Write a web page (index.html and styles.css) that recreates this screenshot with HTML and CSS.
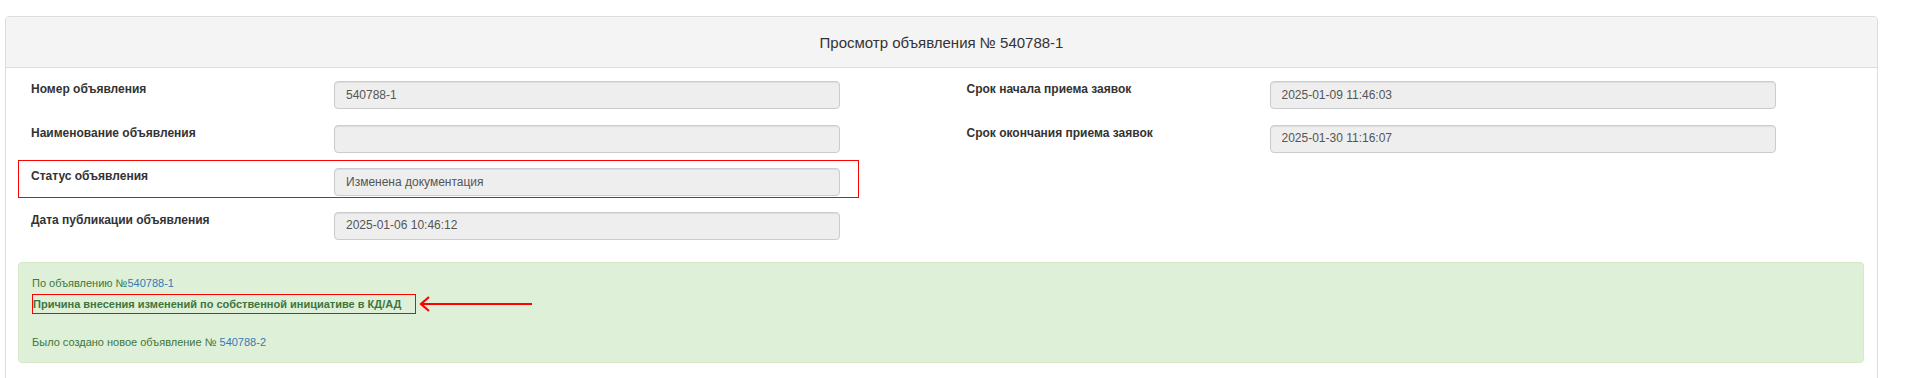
FILE: index.html
```html
<!DOCTYPE html>
<html lang="ru">
  <head>
    <meta charset="UTF-8" />
    <meta name="viewport" content="width=device-width,initial-scale=1.0" />
    <title>Просмотр объявления</title>
    <link rel="stylesheet" href="styles.css">
  </head>
  <body>
    <div class="panel">
      <div class="panel-heading">Просмотр объявления № 540788-1</div>
      <div class="panel-body">
        <div class="columns">
          <div class="col">
            <div class="field">
              <label>Номер объявления</label>
              <div class="input">540788-1</div>
            </div>
            <div class="field">
              <label>Наименование объявления</label>
              <div class="input"></div>
            </div>
            <div class="field marked">
              <label>Статус объявления</label>
              <div class="input">Изменена документация</div>
            </div>
            <div class="field">
              <label>Дата публикации объявления</label>
              <div class="input">2025-01-06 10:46:12</div>
            </div>
          </div>
          <div class="col">
            <div class="field">
              <label>Срок начала приема заявок</label>
              <div class="input">2025-01-09 11:46:03</div>
            </div>
            <div class="field">
              <label>Срок окончания приема заявок</label>
              <div class="input">2025-01-30 11:16:07</div>
            </div>
          </div>
        </div>

        <div class="alert">
          <div class="line">По объявлению №<a href="#">540788-1</a></div>
          <div class="reason-row">
            <span class="reason">Причина внесения изменений по собственной инициативе в КД/АД</span>
            <svg class="arrow" width="114" height="16" viewBox="0 0 114 16">
              <path d="M3 8 H113" stroke="#f00" stroke-width="2" fill="none"/>
              <path d="M10 1 L2 8 L10 15" stroke="#f00" stroke-width="2.2" fill="none"/>
            </svg>
          </div>
          <div class="line last">Было создано новое объявление № <a href="#">540788-2</a></div>
        </div>
      </div>
    </div>
  </body>
</html>
```

FILE: styles.css
```css
body {
  margin: 0;
  padding: 16px 27px 0 5px;
  font-family: "Liberation Sans", Arial, sans-serif;
  font-size: 12px;
  line-height: 17px;
  color: #333;
  background: #fff;
}
a {
  color: #337ab7;
  text-decoration: none;
}
.panel {
  border: 1px solid #ddd;
  border-radius: 4px;
}
.panel-heading {
  height: 50px;
  display: flex;
  align-items: center;
  justify-content: center;
  background: #f4f4f4;
  border-bottom: 1px solid #ddd;
  border-radius: 3px 3px 0 0;
  font-size: 15px;
  color: #333;
}
.panel-body {
  padding: 13px 0 40px;
}
.columns {
  display: grid;
  grid-template-columns: 1fr 1fr;
}
.field {
  display: grid;
  grid-template-columns: 328px 506px;
  align-items: start;
  margin-bottom: 15.5px;
}
.field label {
  padding-left: 25px;
  font-weight: bold;
}
.input {
  box-sizing: border-box;
  height: 28px;
  padding: 0 11px;
  display: flex;
  align-items: center;
  background: #eee;
  border: 1px solid #ccc;
  border-radius: 4px;
  box-shadow: inset 0 1px 1px rgba(0, 0, 0, 0.075);
  color: #555;
}
.marked {
  position: relative;
}
.marked::before {
  content: "";
  position: absolute;
  left: 12px;
  top: -8px;
  width: 841px;
  height: 38px;
  box-sizing: border-box;
  border: 1px solid #f00;
}
.alert {
  margin: 7px 13px 0 12px;
  padding: 12px 13px 11px;
  background: #dff0d8;
  border: 1px solid #d6e9c6;
  border-radius: 4px;
  color: #3c763d;
  font-size: 11px;
}
.line {
  height: 17px;
}
.reason-row {
  margin-top: 2px;
  display: flex;
  align-items: center;
  height: 20px;
}
.reason {
  box-sizing: border-box;
  height: 20px;
  display: inline-flex;
  align-items: center;
  padding: 0 14px 0 0;
  border: 1px solid #f00;
  font-weight: bold;
}
.arrow {
  margin-left: 3px;
}
.line.last {
  margin-top: 20px;
}
```
